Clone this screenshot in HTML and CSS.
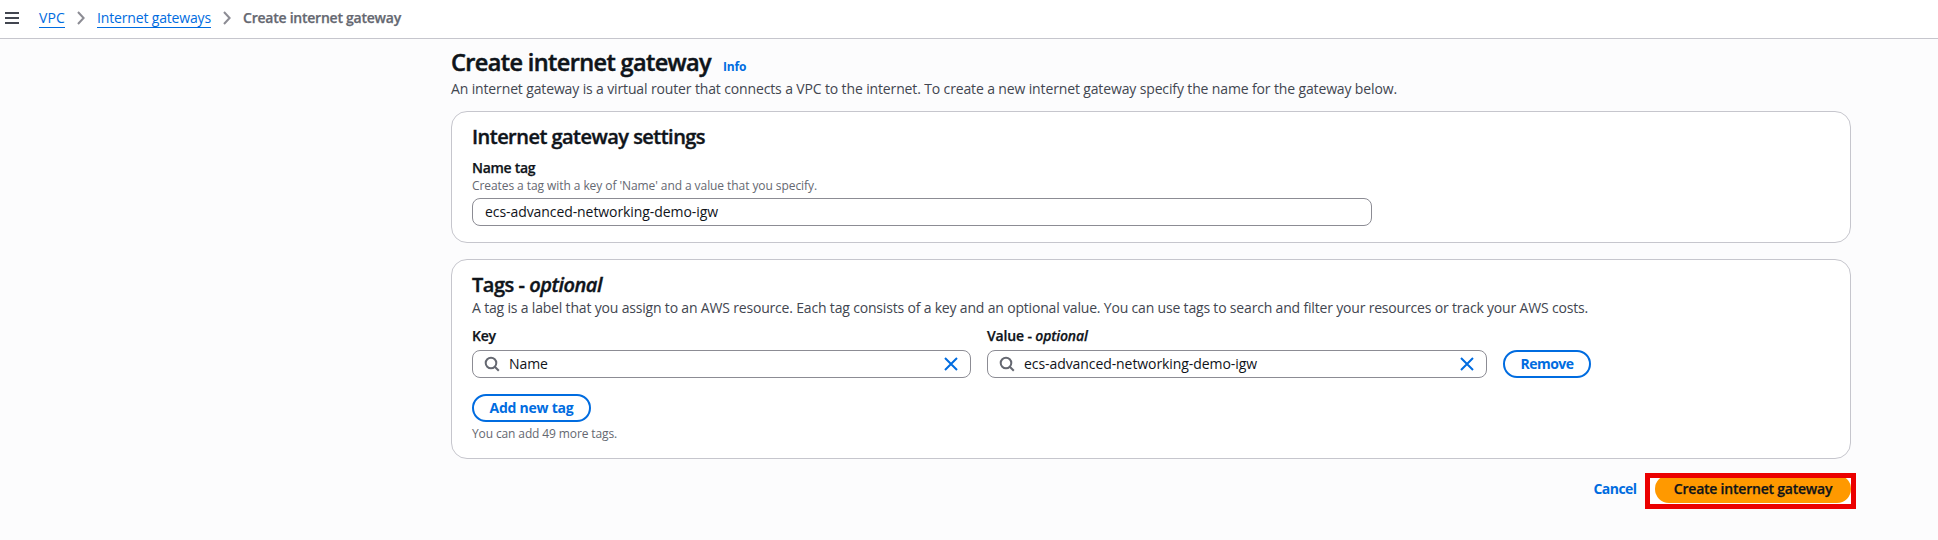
FILE: index.html
```html
<!DOCTYPE html>
<html lang="en">
<head>
<meta charset="utf-8">
<title>Create internet gateway</title>
<link rel="stylesheet" href="styles.css">
</head>
<body>
<header class="topbar">
  <button class="menu" aria-label="Menu"><svg width="14" height="12" viewBox="0 0 14 12"><path d="M0 1h14M0 6h14M0 11h14" stroke="#424650" stroke-width="2"/></svg></button>
  <nav class="crumbs">
    <a class="crumb crumb-vpc" href="#">VPC</a>
    <svg class="chevron" width="8" height="14" viewBox="0 0 8 14"><path d="M1 1l5.6 6L1 13"/></svg>
    <a class="crumb crumb-list" href="#">Internet gateways</a>
    <svg class="chevron" width="8" height="14" viewBox="0 0 8 14"><path d="M1 1l5.6 6L1 13"/></svg>
    <span class="crumb-current">Create internet gateway</span>
  </nav>
</header>
<main class="page">
  <div class="heading">
    <h1>Create internet gateway</h1>
    <a class="info" href="#">Info</a>
  </div>
  <p class="lead">An internet gateway is a virtual router that connects a VPC to the internet. To create a new internet gateway specify the name for the gateway below.</p>

  <section class="card">
    <h2>Internet gateway settings</h2>
    <div class="label name-label">Name tag</div>
    <div class="hint name-hint">Creates a tag with a key of 'Name' and a value that you specify.</div>
    <div class="input name-input"><span class="input-text">ecs-advanced-networking-demo-igw</span></div>
  </section>

  <section class="card">
    <h2 class="tags-title">Tags - <i>optional</i></h2>
    <p class="tags-desc">A tag is a label that you assign to an AWS resource. Each tag consists of a key and an optional value. You can use tags to search and filter your resources or track your AWS costs.</p>
    <div class="tag-row">
      <div class="field">
        <div class="label">Key</div>
        <div class="input search">
          <svg width="16" height="16" viewBox="0 0 16 16"><circle cx="7" cy="7" r="5.3" fill="none" stroke="#656871" stroke-width="2"/><path d="M10.8 10.8l4 4" stroke="#656871" stroke-width="2"/></svg>
          <span class="input-text">Name</span>
          <svg class="clear" width="14" height="14" viewBox="0 0 14 14"><path d="M1 1l12 12M13 1L1 13"/></svg>
        </div>
      </div>
      <div class="field">
        <div class="label value-label">Value - <i>optional</i></div>
        <div class="input search">
          <svg width="16" height="16" viewBox="0 0 16 16"><circle cx="7" cy="7" r="5.3" fill="none" stroke="#656871" stroke-width="2"/><path d="M10.8 10.8l4 4" stroke="#656871" stroke-width="2"/></svg>
          <span class="input-text">ecs-advanced-networking-demo-igw</span>
          <svg class="clear" width="14" height="14" viewBox="0 0 14 14"><path d="M1 1l12 12M13 1L1 13"/></svg>
        </div>
      </div>
      <button class="btn remove">Remove</button>
    </div>
    <button class="btn add">Add new tag</button>
    <div class="hint add-hint">You can add 49 more tags.</div>
  </section>

  <div class="actions">
    <a class="cancel" href="#">Cancel</a>
    <div class="primary-wrap"><button class="primary">Create internet gateway</button><span class="highlight"></span></div>
  </div>
</main>
</body>
</html>
```
FILE: styles.css
```css
* { box-sizing: border-box; }
body {
  margin: 0;
  min-height: 540px;
  background: #fcfcfd;
  color: #0f141a;
  font: 14px/20px "Open Sans", "Noto Sans", sans-serif;
  white-space: nowrap;
}
h1, h2, p { margin: 0; }
a { text-decoration: none; color: #006ce0; }
svg { display: block; flex: none; }
button { font: inherit; padding: 0; margin: 0; }

.topbar {
  display: flex;
  align-items: center;
  height: 39px;
  padding: 0 0 2px 5px;
  background: #fff;
  border-bottom: 1px solid #c6c6cd;
}
.menu { border: 0; background: none; width: 14px; }
.crumbs { display: flex; align-items: center; margin-left: 20px; }
.crumb { height: 20px; border-bottom: 1px solid #006ce0; line-height: 20px; }
.crumb-vpc { width: 26px; letter-spacing: 0.1px; }
.crumb-list { width: 114px; letter-spacing: -0.16px; }
.chevron { margin: 0 12px; }
.chevron path { fill: none; stroke: #8c8c94; stroke-width: 2; }
.crumb-current { color: #656871; font-weight: 600; letter-spacing: -0.24px; -webkit-text-stroke: 0.25px; }

.page { width: 1400px; margin: 8px 0 0 451px; }
.heading { display: flex; align-items: baseline; gap: 12px; height: 30px; }
h1 {
  width: 260px;
  font-size: 23.5px;
  line-height: 30px;
  font-weight: 600;
  letter-spacing: -0.62px;
  -webkit-text-stroke: 0.5px;
}
.info { font-size: 12px; line-height: 16px; font-weight: 700; letter-spacing: -0.2px; }
.lead { margin-top: 2px; color: #424650; letter-spacing: -0.136px; }

.card {
  margin-top: 12px;
  padding: 13px 20px 16px;
  background: #fff;
  border: 1px solid #c6c6cd;
  border-radius: 16px;
}
.card + .card { margin-top: 16px; }
h2 {
  font-size: 20px;
  line-height: 24px;
  font-weight: 600;
  letter-spacing: -0.53px;
  -webkit-text-stroke: 0.4px;
}
.tags-title { letter-spacing: -0.47px; }
.tags-desc { margin-top: 1px; color: #424650; letter-spacing: -0.18px; }
.label { font-weight: 600; letter-spacing: -0.3px; -webkit-text-stroke: 0.25px; }
.value-label { letter-spacing: -0.15px; }
.name-label { margin-top: 9px; }
.hint { font-size: 12px; line-height: 16px; color: #656871; }
.name-hint { letter-spacing: -0.075px; }
.add-hint { margin-top: 4px; letter-spacing: -0.12px; }
.input {
  display: flex;
  align-items: center;
  height: 28px;
  margin-top: 4px;
  padding: 0 12px;
  background: #fff;
  border: 1px solid #8c8c94;
  border-radius: 8px;
}
.name-input { width: 900px; }
.input-text { letter-spacing: -0.075px; }
.search { gap: 9px; padding-left: 11px; }
.clear { margin-left: auto; }
.clear path { stroke: #006ce0; stroke-width: 2; }

.tag-row {
  display: grid;
  grid-template-columns: 499px 500px auto;
  column-gap: 16px;
  justify-content: start;
  align-items: end;
  margin-top: 8px;
}
.btn {
  display: block;
  height: 28px;
  border: 2px solid #006ce0;
  border-radius: 14px;
  background: #fff;
  color: #006ce0;
  font-weight: 700;
  line-height: 24px;
}
.remove { width: 88px; letter-spacing: -0.5px; }
.add { width: 119px; margin-top: 16px; letter-spacing: -0.23px; }

.actions { display: flex; justify-content: flex-end; align-items: center; gap: 18.5px; margin-top: 16px; }
.cancel { font-weight: 700; letter-spacing: -0.55px; }
.primary-wrap { position: relative; isolation: isolate; }
.primary {
  display: block;
  width: 196px;
  height: 28px;
  border: 0;
  border-radius: 14px;
  background: #ff9900;
  color: #0f141a;
  font-weight: 600;
  letter-spacing: -0.22px;
  -webkit-text-stroke: 0.25px;
}
.highlight, .primary-wrap::before { position: absolute; inset: -2px -5px -6px -10px; }
.highlight { border: 5px solid #eb0000; }
.primary-wrap::before { content: ""; z-index: -1; background: #fff; }
```
